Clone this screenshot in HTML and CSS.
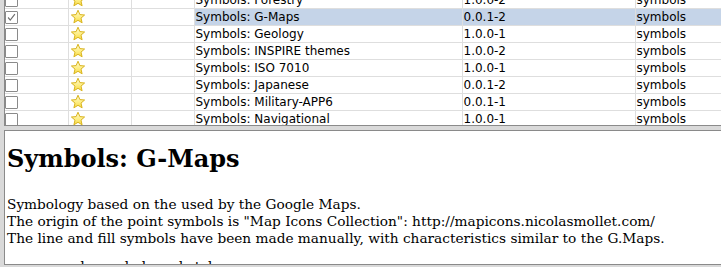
FILE: index.html
```html
<!DOCTYPE html>
<html lang="en">
<head>
    <meta charset="UTF-8">
    <title>Extensions</title>
    <link rel="stylesheet" href="styles.css">
</head>
<body>

    <div class="list">
        <table class="packages">
            <colgroup>
                <col class="c-check"><col class="c-star"><col class="c-blank">
                <col class="c-name"><col class="c-version"><col class="c-cat">
            </colgroup>
            <tr>
                <td><span class="box"></span></td>
                <td><svg class="star" viewBox="0 0 16 16"><use href="#star"/></svg></td>
                <td></td>
                <td>Symbols: Forestry</td><td>1.0.0-2</td><td>symbols</td>
            </tr>
            <tr class="selected">
                <td><span class="box"><svg viewBox="0 0 13 13"><path d="M2.5 6.5 L5 9.5 L10.5 2.5" fill="none" stroke="#6e6e6e" stroke-width="1.4"/></svg></span></td>
                <td><svg class="star" viewBox="0 0 16 16"><use href="#star"/></svg></td>
                <td></td>
                <td class="hl">Symbols: G-Maps</td><td class="hl">0.0.1-2</td><td class="hl">symbols</td>
            </tr>
            <tr>
                <td><span class="box"></span></td>
                <td><svg class="star" viewBox="0 0 16 16"><use href="#star"/></svg></td>
                <td></td>
                <td>Symbols: Geology</td><td>1.0.0-1</td><td>symbols</td>
            </tr>
            <tr>
                <td><span class="box"></span></td>
                <td><svg class="star" viewBox="0 0 16 16"><use href="#star"/></svg></td>
                <td></td>
                <td>Symbols: INSPIRE themes</td><td>1.0.0-2</td><td>symbols</td>
            </tr>
            <tr>
                <td><span class="box"></span></td>
                <td><svg class="star" viewBox="0 0 16 16"><use href="#star"/></svg></td>
                <td></td>
                <td>Symbols: ISO 7010</td><td>1.0.0-1</td><td>symbols</td>
            </tr>
            <tr>
                <td><span class="box"></span></td>
                <td><svg class="star" viewBox="0 0 16 16"><use href="#star"/></svg></td>
                <td></td>
                <td>Symbols: Japanese</td><td>0.0.1-2</td><td>symbols</td>
            </tr>
            <tr>
                <td><span class="box"></span></td>
                <td><svg class="star" viewBox="0 0 16 16"><use href="#star"/></svg></td>
                <td></td>
                <td>Symbols: Military-APP6</td><td>0.0.1-1</td><td>symbols</td>
            </tr>
            <tr>
                <td><span class="box"></span></td>
                <td><svg class="star" viewBox="0 0 16 16"><use href="#star"/></svg></td>
                <td></td>
                <td>Symbols: Navigational</td><td>1.0.0-1</td><td>symbols</td>
            </tr>
        </table>
    </div>

    <div class="details">
        <h1>Symbols: G-Maps</h1>
        <p>Symbology based on the used by the Google Maps.<br>
        The origin of the point symbols is "Map Icons Collection": http://mapicons.nicolasmollet.com/<br>
        The line and fill symbols have been made manually, with characteristics similar to the G.Maps.</p>
        <ul>
            <li>code symbols and styles</li>
        </ul>
    </div>

    <svg width="0" height="0" class="defs">
        <defs>
            <linearGradient id="gold" x1="0" y1="0" x2="0" y2="1">
                <stop offset="0" stop-color="#fffbd6"/>
                <stop offset="0.6" stop-color="#fdec7c"/>
                <stop offset="1" stop-color="#f5d640"/>
            </linearGradient>
            <path id="star" d="M8 1.2 L9.9 5.6 L14.6 6 L11 9.1 L12.1 13.8 L8 11.3 L3.9 13.8 L5 9.1 L1.4 6 L6.1 5.6 Z" fill="url(#gold)" stroke="#d9b41e" stroke-width="1" stroke-linejoin="round"/>
        </defs>
    </svg>

</body>
</html>
```

FILE: styles.css
```css
body {
    margin: 0;
    background-color: #d9d9d9;
    width: 721px;
    height: 267px;
    overflow: hidden;
}
.defs {
    position: absolute;
}
.list {
    margin-left: 4px;
    height: 125px;
    background: #fff;
    border-left: 1px solid #8a8a8a;
    border-bottom: 1px solid #8a8a8a;
    overflow: hidden;
}
.packages {
    border-collapse: collapse;
    table-layout: fixed;
    width: 717px;
    margin-top: -8px;
    font-family: "DejaVu Sans", sans-serif;
    font-size: 12px;
    color: #000;
}
.c-check { width: 63px; }
.c-star { width: 63px; }
.c-blank { width: 63px; }
.c-name { width: 268px; }
.c-version { width: 173px; }
.packages td {
    height: 16px;
    padding: 1px 0 0 1px;
    box-sizing: border-box;
    border-right: 1px solid #dedede;
    border-bottom: 1px solid #dedede;
    white-space: nowrap;
    overflow: hidden;
    line-height: 15px;
}
.packages td:first-child {
    padding-left: 0;
}
.packages td:last-child {
    border-right: none;
}
.packages .hl {
    background-color: #c5d4e8;
}
.box {
    display: block;
    width: 11px;
    height: 11px;
    border: 1px solid #8a8a8a;
    border-radius: 1px;
    background: #fff;
}
.box svg {
    display: block;
    width: 11px;
    height: 11px;
}
.star {
    display: block;
    width: 16px;
    height: 16px;
    margin-top: -1px;
}
.details {
    margin: 4px 0 0 4px;
    height: 133px;
    background: #fff;
    border-left: 1px solid #8a8a8a;
    border-top: 1px solid #8a8a8a;
    border-bottom: 1px solid #8a8a8a;
    overflow: hidden;
    padding-left: 2px;
    font-family: "DejaVu Serif", serif;
    font-size: 13.7px;
    line-height: 17px;
    color: #000;
}
.details h1 {
    font-size: 24px;
    font-weight: bold;
    line-height: 28px;
    margin: 14px 0 23px 0;
}
.details p {
    margin: 0;
}
.details ul {
    margin: 11px 0 0 0;
    padding-left: 53px;
    list-style: none;
}
```
